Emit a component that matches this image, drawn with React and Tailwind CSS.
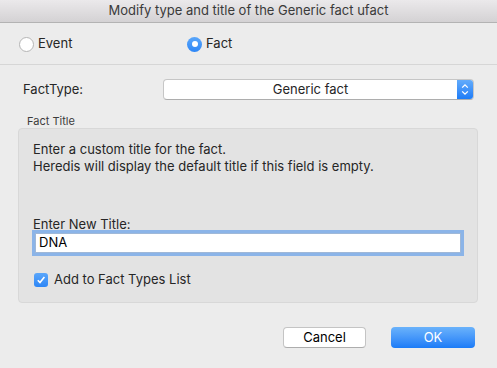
import React, { useState } from "react";

function Radio({ checked }) {
  if (checked) {
    return (
      <span className="w-[15px] h-[15px] rounded-full bg-gradient-to-b from-[#5aa6fa] to-[#2c86f6] flex items-center justify-center shrink-0">
        <span className="w-[6px] h-[6px] rounded-full bg-white" />
      </span>
    );
  }
  return (
    <span className="w-[15px] h-[15px] rounded-full bg-white border border-[#b5b5b5] shrink-0" />
  );
}

export default function App() {
  const [kind, setKind] = useState("fact");
  const [title, setTitle] = useState("DNA");
  const [addToList, setAddToList] = useState(true);

  return (
    <div
      className="w-[497px] h-[368px] bg-[#ececec] text-[#262626] overflow-hidden flex flex-col"
      style={{ fontFamily: 'Inter, "Liberation Sans", Arial, sans-serif' }}
    >
      {/* title bar */}
      <div className="h-[23px] shrink-0 border-b border-[#b3b3b3] bg-gradient-to-b from-[#ebe9eb] to-[#d4d2d4] flex items-center justify-center text-[13px] text-[#3a3a3a]">
        Modify type and title of the Generic fact ufact
      </div>

      {/* radios */}
      <div className="h-[42px] shrink-0 border-b border-[#d6d6d6] flex items-center pt-[1px] text-[13px]">
        <button
          className="ml-[19px] w-[168px] flex items-center gap-[4px]"
          onClick={() => setKind("event")}
        >
          <Radio checked={kind === "event"} />
          <span>Event</span>
        </button>
        <button
          className="flex items-center gap-[4px]"
          onClick={() => setKind("fact")}
        >
          <Radio checked={kind === "fact"} />
          <span>Fact</span>
        </button>
      </div>

      {/* fact type */}
      <div className="mt-[14px] h-[21px] flex items-center text-[13px]">
        <span className="ml-[23px] w-[140px]">FactType:</span>
        <div className="w-[311px] h-[21px] flex rounded-[4px] bg-white border border-[#c6c6c6] border-b-[#adadad] overflow-hidden">
          <span className="flex-1 text-center leading-[19px]">Generic fact</span>
          <span className="w-[16px] bg-gradient-to-b from-[#62abfb] to-[#1b7cf7] flex items-center justify-center">
            <svg width="8" height="13" viewBox="0 0 8 13" fill="none">
              <path d="M1.2 4.6 L4 1.8 L6.8 4.6" stroke="white" strokeWidth="1.3" />
              <path d="M1.2 8.4 L4 11.2 L6.8 8.4" stroke="white" strokeWidth="1.3" />
            </svg>
          </span>
        </div>
      </div>

      {/* fact title group */}
      <div className="mt-[15px] ml-[27px] h-[13px] text-[11px] leading-[13px] text-[#3c3c3c]">
        Fact Title
      </div>
      <div className="ml-[18px] w-[460px] h-[175px] bg-[#e3e3e3] border border-[#d8d8d8] rounded-[4px] px-[14px] pt-[12px] text-[13px]">
        <p className="leading-[17px]">Enter a custom title for the fact.</p>
        <p className="leading-[17px]">
          Heredis will display the default title if this field is empty.
        </p>
        <div className="mt-[41px] leading-[16px]">Enter New Title:</div>
        <div className="mt-[1px] ml-[2px] w-[426px] h-[20px] bg-white border border-[#9fb8d8] shadow-[0_0_0_3px_#8bb4e8] flex items-center px-[3px]">
          <input
            value={title}
            onChange={(e) => setTitle(e.target.value)}
            className="w-full outline-none bg-transparent text-[13px] text-black caret-black"
          />
        </div>
        <label className="mt-[19px] ml-[1px] h-[16px] flex items-center gap-[6px] cursor-default">
          <span
            onClick={() => setAddToList(!addToList)}
            className={
              addToList
                ? "w-[14px] h-[14px] rounded-[3px] bg-gradient-to-b from-[#5aa6fa] to-[#2c86f6] flex items-center justify-center"
                : "w-[14px] h-[14px] rounded-[3px] bg-white border border-[#b5b5b5]"
            }
          >
            {addToList && (
              <svg width="10" height="10" viewBox="0 0 10 10" fill="none">
                <path d="M1.8 5.2 L4 7.6 L8.4 2" stroke="white" strokeWidth="1.6" />
              </svg>
            )}
          </span>
          <span>Add to Fact Types List</span>
        </label>
      </div>

      {/* buttons */}
      <div className="mt-[24px] flex text-[13px]">
        <button className="ml-[283px] w-[83px] h-[21px] rounded-[4px] bg-white border border-[#c4c4c4] border-b-[#adadad] text-black">
          Cancel
        </button>
        <button className="ml-[25px] w-[84px] h-[21px] rounded-[4px] bg-gradient-to-b from-[#6ab2fb] to-[#1a7bf7] text-white">
          OK
        </button>
      </div>
    </div>
  );
}
